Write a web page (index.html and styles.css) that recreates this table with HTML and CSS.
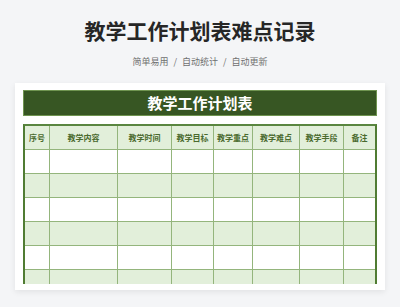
FILE: index.html
```html
<!DOCTYPE html>
<html lang="zh">
<head>
<meta charset="utf-8">
<link rel="stylesheet" href="styles.css">
</head>
<body>
<h1 class="title">教学工作计划表难点记录</h1>
<div class="subtitle">
  <span>简单易用</span><span class="sep">/</span><span>自动统计</span><span class="sep">/</span><span>自动更新</span>
</div>
<div class="card">
  <div class="banner">教学工作计划表</div>
  <div class="table-clip">
    <div class="grid">
      <div class="hd">序号</div><div class="hd">教学内容</div><div class="hd">教学时间</div><div class="hd">教学目标</div><div class="hd">教学重点</div><div class="hd">教学难点</div><div class="hd">教学手段</div><div class="hd">备注</div>
      <div class="c"></div><div class="c"></div><div class="c"></div><div class="c"></div><div class="c"></div><div class="c"></div><div class="c"></div><div class="c"></div>
      <div class="c g"></div><div class="c g"></div><div class="c g"></div><div class="c g"></div><div class="c g"></div><div class="c g"></div><div class="c g"></div><div class="c g"></div>
      <div class="c"></div><div class="c"></div><div class="c"></div><div class="c"></div><div class="c"></div><div class="c"></div><div class="c"></div><div class="c"></div>
      <div class="c g"></div><div class="c g"></div><div class="c g"></div><div class="c g"></div><div class="c g"></div><div class="c g"></div><div class="c g"></div><div class="c g"></div>
      <div class="c"></div><div class="c"></div><div class="c"></div><div class="c"></div><div class="c"></div><div class="c"></div><div class="c"></div><div class="c"></div>
      <div class="c g"></div><div class="c g"></div><div class="c g"></div><div class="c g"></div><div class="c g"></div><div class="c g"></div><div class="c g"></div><div class="c g"></div>
      <div class="c"></div><div class="c"></div><div class="c"></div><div class="c"></div><div class="c"></div><div class="c"></div><div class="c"></div><div class="c"></div>
    </div>
  </div>
</div>
</body>
</html>
```

FILE: styles.css
```css
* { box-sizing: border-box; }
html, body { margin: 0; padding: 0; }
body {
  background: #f4f5f7;
  font-family: "Noto Sans CJK SC", "Noto Sans", sans-serif;
  width: 400px;
  height: 307px;
  overflow: hidden;
}
.title {
  margin: 15px 0 0;
  height: 30px;
  line-height: 30px;
  font-size: 21px;
  font-weight: 700;
  color: #262626;
  text-align: center;
}
.subtitle {
  margin-top: 10px;
  height: 14px;
  line-height: 14px;
  font-size: 9px;
  color: #707070;
  display: flex;
  justify-content: center;
  gap: 5px;
}
.card {
  margin: 14px 15px 0;
  height: 207px;
  background: #fff;
  box-shadow: 0 2px 6px rgba(0,0,0,0.08);
  padding: 7px 8px 0 8px;
}
.banner {
  height: 26px;
  line-height: 24px;
  background: #375623;
  border: 1px solid #6f9450;
  color: #fff;
  font-size: 15px;
  font-weight: 700;
  text-align: center;
}
.table-clip {
  margin-top: 8px;
  height: 160px;
  overflow: hidden;
}
.grid {
  width: 354px;
  display: grid;
  grid-template-columns: 24px 67px 53px 41px 38px 46px 43px 1fr;
  grid-auto-rows: 23px;
  grid-template-rows: 23px;
  background: #94b57c;
  border-left: 2px solid #507c33;
  border-right: 2px solid #507c33;
  border-top: 2px solid #5a8640;
  gap: 1px;
}
.hd {
  background: #e2efda;
  color: #4a6a2e;
  font-size: 8px;
  font-weight: 700;
  display: flex;
  align-items: center;
  justify-content: center;
}
.c { background: #fff; }
.c.g { background: #e2efda; }
```
